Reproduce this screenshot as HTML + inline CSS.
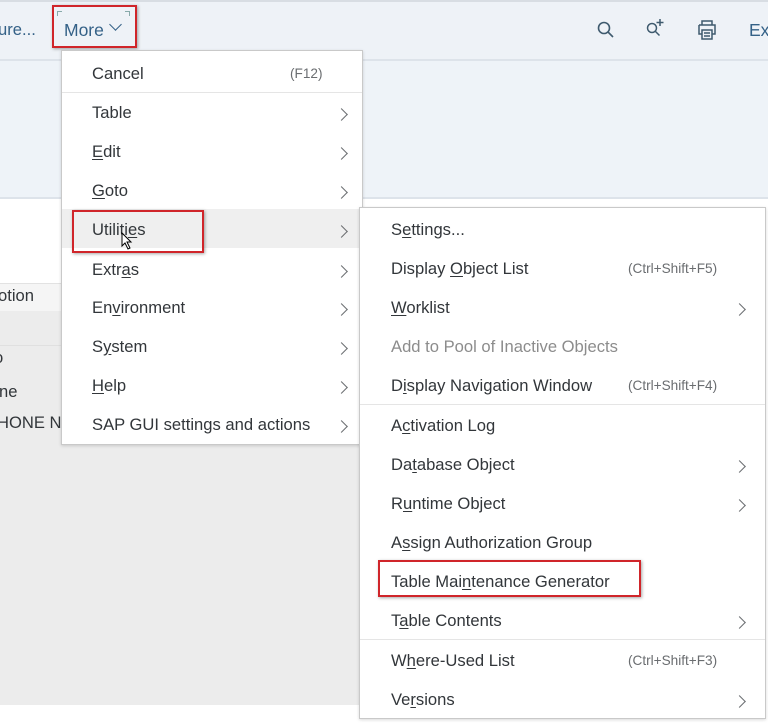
<!DOCTYPE html>
<html><head><meta charset="utf-8"><style>
*{margin:0;padding:0;box-sizing:border-box}
body{width:768px;height:727px;position:relative;overflow:hidden;background:#fff;font-family:"Liberation Sans",Arial,sans-serif;color:#32363a}
.a{position:absolute}
.t{position:absolute;font-size:16.6px;line-height:20px;white-space:nowrap;margin-top:2px}
.sc{position:absolute;font-size:13.6px;color:#6a6d70;line-height:16px;white-space:nowrap;margin-top:1px}
.ch{position:absolute;width:9px;height:9px;border-right:1.5px solid #6a6d70;border-top:1.5px solid #6a6d70;transform:rotate(45deg);margin-top:3px}
u{text-decoration:underline;text-underline-offset:2px}
.red{position:absolute;border:2px solid #d0252a;box-shadow:1px 1px 3px rgba(0,0,0,.35)}
</style></head><body>
<div class="a" style="left:0;top:0;width:768px;height:2px;background:#d8dde3"></div>
<div class="a" style="left:0;top:2px;width:768px;height:57px;background:#eef2f7"></div>
<div class="a" style="left:0;top:59px;width:768px;height:2px;background:#dde3ea"></div>
<div class="a" style="left:0;top:61px;width:768px;height:136px;background:#eef3f8"></div>
<div class="a" style="left:0;top:197px;width:768px;height:2px;background:#dde3ea"></div>
<div class="a" style="left:0;top:283px;width:200px;height:28px;background:#f5f5f5;border-top:1px solid #e2e2e2"></div>
<div class="a" style="left:0;top:311px;width:380px;height:394px;background:#ececec"></div>
<div class="a" style="left:0;top:345px;width:200px;height:1px;background:#e0e0e0"></div>
<div class="t" style="left:-2px;top:284px">otion</div>
<div class="t" style="left:-6px;top:346px">o</div>
<div class="t" style="left:-1px;top:380px">ne</div>
<div class="t" style="left:-3px;top:411px">HONE N</div>
<div class="t" style="left:-2px;top:18px;color:#346187">ure...</div>
<div class="t" style="left:64px;top:18px;color:#346187;font-size:17.5px">More</div>
<div class="a" style="left:111px;top:20px;width:9px;height:9px;border-right:1.5px solid #346187;border-bottom:1.5px solid #346187;transform:rotate(45deg)"></div>
<div class="a" style="left:57px;top:11px;width:5px;height:5px;border-left:1px solid #8aa;border-top:1px solid #8aa"></div>
<div class="a" style="left:125px;top:11px;width:5px;height:5px;border-right:1px solid #8aa;border-top:1px solid #8aa"></div>
<div class="red" style="left:52px;top:5px;width:85px;height:43px"></div>
<svg class="a" style="left:596px;top:20px" width="20" height="20" viewBox="0 0 20 20" fill="none" stroke="#3e5a6e" stroke-width="1.6"><circle cx="8" cy="8" r="5.5"/><path d="M12 12l5 5"/></svg>
<svg class="a" style="left:644px;top:16px" width="24" height="24" viewBox="0 0 24 24" fill="none" stroke="#3e5a6e" stroke-width="1.5"><circle cx="8" cy="12" r="4.5"/><path d="M11.5 15.5l4 4M16 3v7M12.5 6.5h7"/></svg>
<svg class="a" style="left:696px;top:19px" width="22" height="22" viewBox="0 0 22 22" fill="none" stroke="#3e5a6e" stroke-width="1.5"><path d="M6 6V2h10v4M3 6h16v9h-3M6 15H3V6M6 11h10v9H6z M8 14h6M8 17h6"/></svg>
<div class="t" style="left:749px;top:18px;color:#346187;font-size:17.5px">Ex</div>
<div class="a" style="left:61px;top:50px;width:302px;height:395px;background:#fff;border:1px solid #c9c9c9;box-shadow:0 1px 3px rgba(0,0,0,.15)"></div>
<div class="a" style="left:62px;top:92px;width:300px;height:1px;background:#e5e5e5"></div>
<div class="a" style="left:62px;top:209px;width:300px;height:39px;background:#efefef"></div>
<div class="t" style="left:92px;top:62px">Cancel</div><div class="sc" style="left:290px;top:65px">(F12)</div>
<div class="t" style="left:92px;top:101px">Table</div><div class="ch" style="left:337px;top:107px"></div>
<div class="t" style="left:92px;top:140px"><u>E</u>dit</div><div class="ch" style="left:337px;top:146px"></div>
<div class="t" style="left:92px;top:179px"><u>G</u>oto</div><div class="ch" style="left:337px;top:185px"></div>
<div class="t" style="left:92px;top:218px">Utiliti<u>e</u>s</div><div class="ch" style="left:337px;top:224px"></div>
<div class="t" style="left:92px;top:258px">Extr<u>a</u>s</div><div class="ch" style="left:337px;top:264px"></div>
<div class="t" style="left:92px;top:296px">En<u>v</u>ironment</div><div class="ch" style="left:337px;top:302px"></div>
<div class="t" style="left:92px;top:335px">S<u>y</u>stem</div><div class="ch" style="left:337px;top:341px"></div>
<div class="t" style="left:92px;top:374px"><u>H</u>elp</div><div class="ch" style="left:337px;top:380px"></div>
<div class="t" style="left:92px;top:413px">SAP GUI settings and actions</div><div class="ch" style="left:337px;top:419px"></div>
<div class="red" style="left:72px;top:210px;width:132px;height:43px"></div>
<svg class="a" style="left:121px;top:232px" width="12" height="18" viewBox="0 0 12 18"><path d="M1 1v13l3-3 3 6 2-1-3-6h4z" fill="#fff" stroke="#000" stroke-width="1"/></svg>
<div class="a" style="left:359px;top:207px;width:407px;height:512px;background:#fff;border:1px solid #c9c9c9;box-shadow:0 1px 3px rgba(0,0,0,.15)"></div>
<div class="a" style="left:360px;top:404px;width:405px;height:1px;background:#e5e5e5"></div>
<div class="a" style="left:360px;top:639px;width:405px;height:1px;background:#e5e5e5"></div>
<div class="t" style="left:391px;top:218px">S<u>e</u>ttings...</div>
<div class="t" style="left:391px;top:257px">Display <u>O</u>bject List</div><div class="sc" style="left:628px;top:260px">(Ctrl+Shift+F5)</div>
<div class="t" style="left:391px;top:296px"><u>W</u>orklist</div><div class="ch" style="left:735px;top:302px"></div>
<div class="t" style="left:391px;top:335px;color:#8c8c8c">Add to Pool of Inactive Objects</div>
<div class="t" style="left:391px;top:374px">D<u>i</u>splay Navigation Window</div><div class="sc" style="left:628px;top:377px">(Ctrl+Shift+F4)</div>
<div class="t" style="left:391px;top:414px">A<u>c</u>tivation Log</div>
<div class="t" style="left:391px;top:453px">Da<u>t</u>abase Object</div><div class="ch" style="left:735px;top:459px"></div>
<div class="t" style="left:391px;top:492px">R<u>u</u>ntime Object</div><div class="ch" style="left:735px;top:498px"></div>
<div class="t" style="left:391px;top:531px">A<u>s</u>sign Authorization Group</div>
<div class="t" style="left:391px;top:570px">Table Mai<u>n</u>tenance Generator</div>
<div class="t" style="left:391px;top:609px">T<u>a</u>ble Contents</div><div class="ch" style="left:735px;top:615px"></div>
<div class="t" style="left:391px;top:649px">W<u>h</u>ere-Used List</div><div class="sc" style="left:628px;top:652px">(Ctrl+Shift+F3)</div>
<div class="t" style="left:391px;top:688px">Ve<u>r</u>sions</div><div class="ch" style="left:735px;top:694px"></div>
<div class="red" style="left:378px;top:560px;width:263px;height:37px"></div>
</body></html>
